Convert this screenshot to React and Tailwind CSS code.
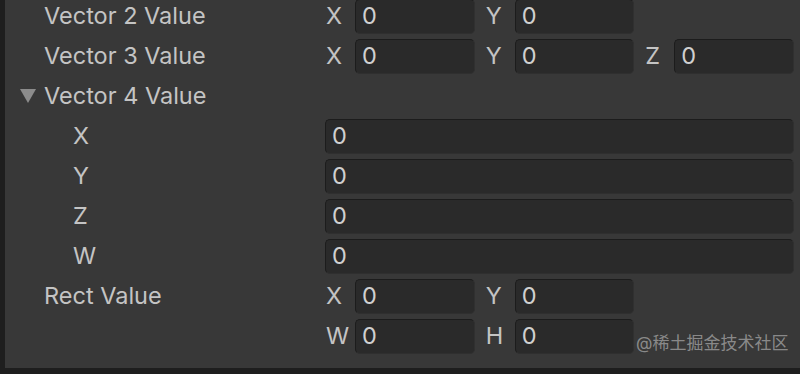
import React from 'react'

const font = { fontFamily: 'Inter, "Noto Sans CJK SC", sans-serif' }

function Field({ value = '0' }) {
  return (
    <div className="flex h-[35px] flex-1 items-center rounded-[5px] border border-[#1c1c1c] border-b-[#2f2f2f] border-r-[#303030] bg-[#2a2a2a] pl-[6px] text-[23.5px] text-[#d0d0d0]">
      {value}
    </div>
  )
}

function Comp({ label }) {
  return (
    <div className="flex items-center">
      <span className="w-[30px] pl-[1px] text-[23.5px] text-[#c4c4c4]">{label}</span>
      <Field />
    </div>
  )
}

function Row({ label, indent = false, foldout = false, children }) {
  return (
    <div className="flex h-[40px] items-center">
      <div className={`relative flex w-[320px] shrink-0 items-center ${indent ? 'pl-[68px]' : 'pl-[39px]'} text-[23.5px] text-[#c4c4c4]`}>
        {foldout && (
          <svg className="absolute left-[15px] top-1/2 -translate-y-1/2" width="16" height="14" viewBox="0 0 16 14">
            <polygon points="0,0 16,0 8,14" fill="#8c8c8c" />
          </svg>
        )}
        {label}
      </div>
      <div className="flex-1 pr-[6px]">{children}</div>
    </div>
  )
}

export default function App() {
  return (
    <div className="relative h-[374px] w-[800px] overflow-hidden bg-[#1e1e1e]" style={font}>
      <div className="ml-[5px] h-[372px] bg-[#383838]">
        <div className="-mt-[4px]">
          <Row label="Vector 2 Value">
            <div className="grid grid-cols-3 gap-[10px]">
              <Comp label="X" />
              <Comp label="Y" />
            </div>
          </Row>
          <Row label="Vector 3 Value">
            <div className="grid grid-cols-3 gap-[10px]">
              <Comp label="X" />
              <Comp label="Y" />
              <Comp label="Z" />
            </div>
          </Row>
          <Row label="Vector 4 Value" foldout />
          <Row label="X" indent><div className="flex"><Field /></div></Row>
          <Row label="Y" indent><div className="flex"><Field /></div></Row>
          <Row label="Z" indent><div className="flex"><Field /></div></Row>
          <Row label="W" indent><div className="flex"><Field /></div></Row>
          <Row label="Rect Value">
            <div className="grid grid-cols-3 gap-[10px]">
              <Comp label="X" />
              <Comp label="Y" />
            </div>
          </Row>
          <Row label="">
            <div className="grid grid-cols-3 gap-[10px]">
              <Comp label="W" />
              <Comp label="H" />
            </div>
          </Row>
        </div>
      </div>
      <div className="absolute left-[636px] top-[331px] text-[17px] text-[#a0a0a0]/80">@稀土掘金技术社区</div>
    </div>
  )
}
